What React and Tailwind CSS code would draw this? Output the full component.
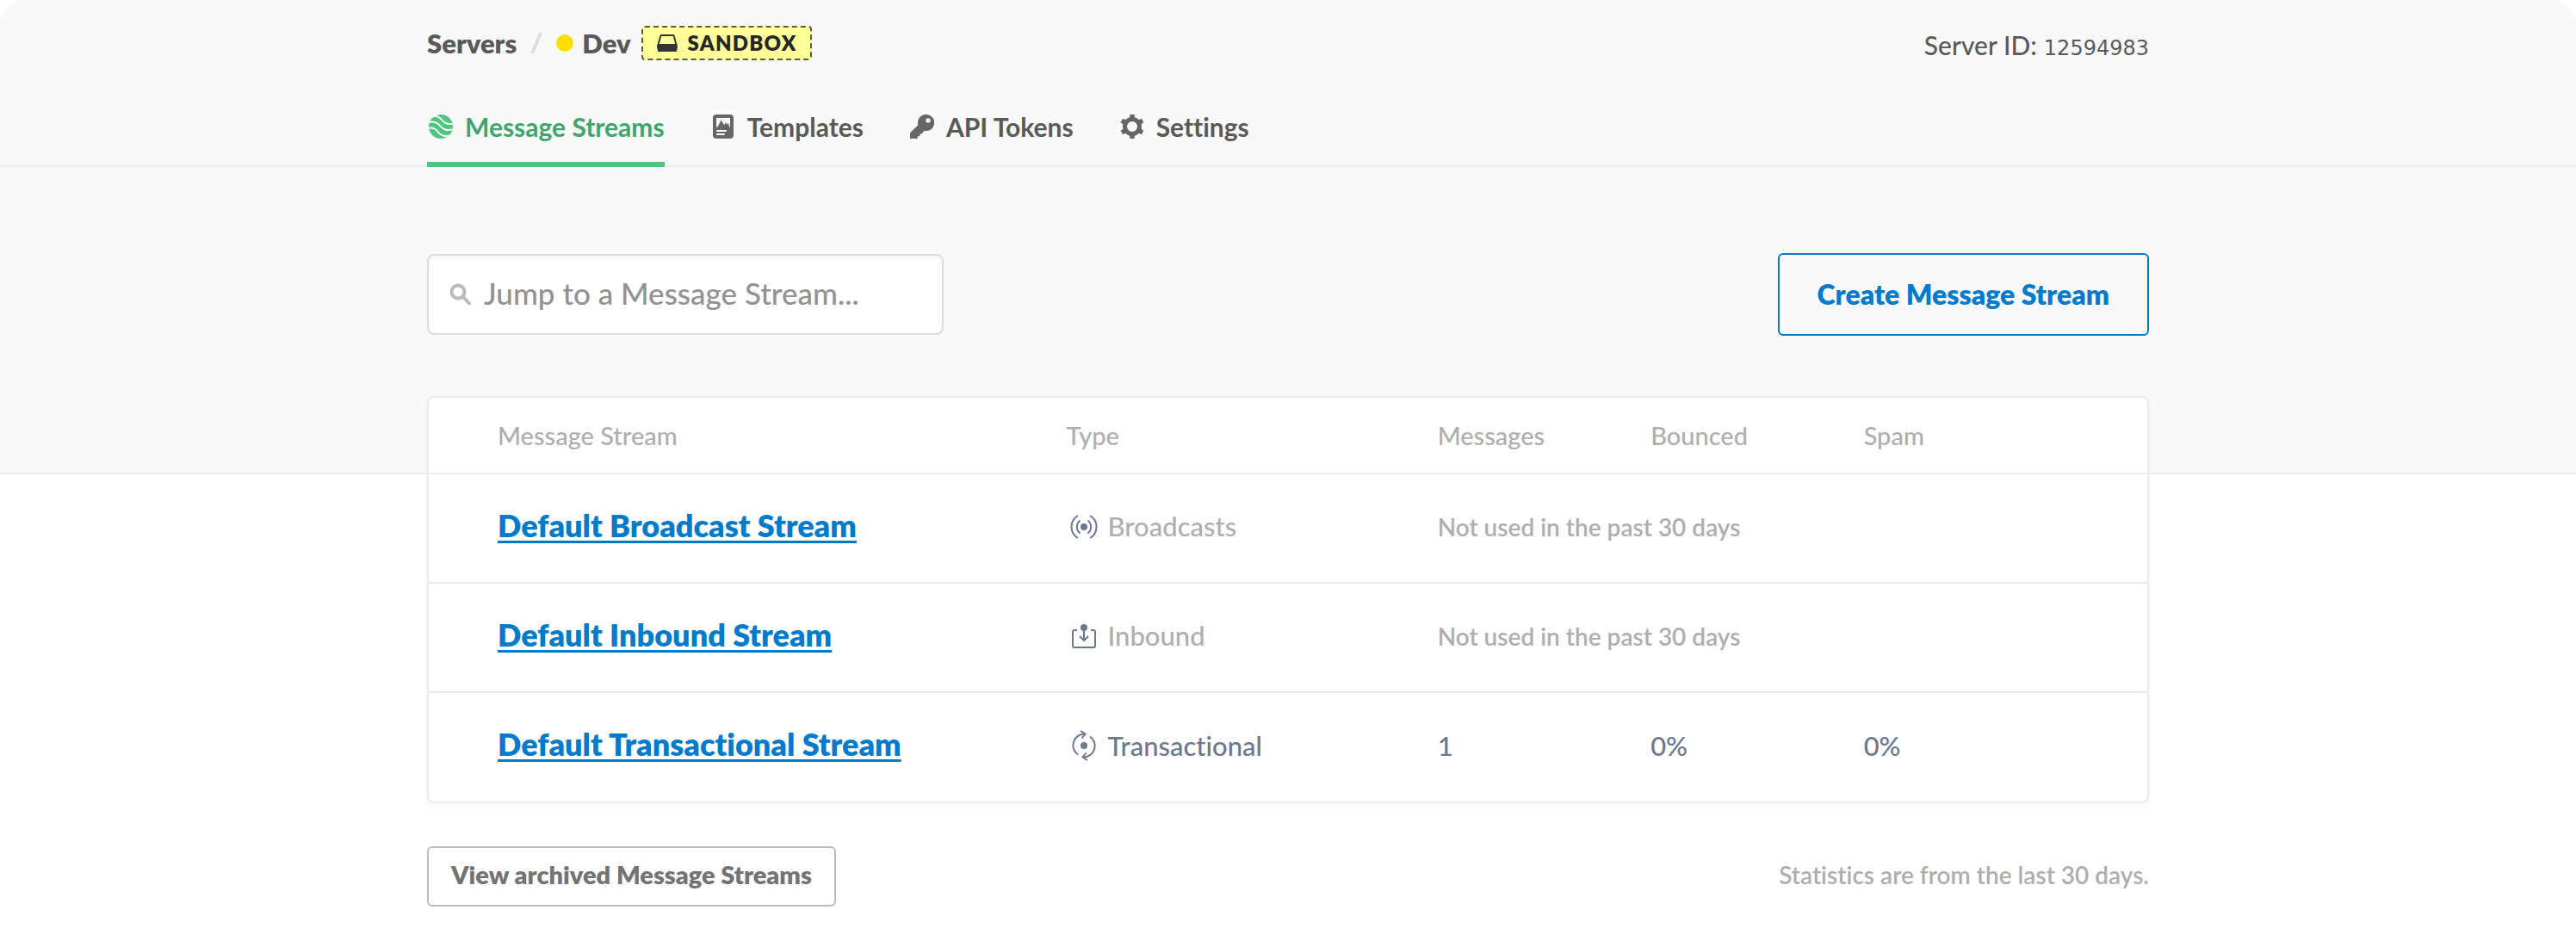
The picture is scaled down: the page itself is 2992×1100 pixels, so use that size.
import React from "react";

const sans = "font-['Lato',sans-serif] [font-variant-ligatures:none]";

function StreamsIcon() {
  return (
    <svg className="h-7 w-[30px] shrink-0" viewBox="-2 0 30 28" fill="none" aria-hidden="true">
      <clipPath id="streams-disc">
        <circle cx="14" cy="14" r="14" />
      </clipPath>
      <circle cx="14" cy="14" r="14" fill="#4fc47f" />
      <g clipPath="url(#streams-disc)" stroke="#f9f9f9" strokeWidth="2">
        <path d="M4 2.500C8 1.500 11.500 2 14.500 5.500C18 10 21 12 29 10.500" />
        <path d="M-1 9C5 7.500 9 8.500 12.500 12.500C16.500 17.500 20 19.500 29 17" />
        <path d="M-1 16C4 14.500 7.500 16 10.500 20C13.500 24 17 26 24 24.500" />
      </g>
    </svg>
  );
}

function TemplatesIcon() {
  return (
    <svg className="h-7 w-7 shrink-0" viewBox="-2 0 28 28" aria-hidden="true">
      <rect width="24" height="28" rx="4" fill="#666" />
      <path fill="#f9f9f9" d="M4 4H20V14.500H19L18 10L16.500 11.500L15 9.500L13 12L9.500 6.500L5.500 14.500H4Z" />
      <rect x="4" y="18" width="12" height="2" rx="1" fill="#f9f9f9" />
      <rect x="4" y="22" width="10" height="2" rx="1" fill="#f9f9f9" />
    </svg>
  );
}

function KeyIcon() {
  return (
    <svg className="h-7 w-7 shrink-0" viewBox="0 0 28 28" aria-hidden="true">
      <path
        fill="#666"
        fillRule="evenodd"
        d="M18.500 0A9.500 9.500 0 0 0 9.400 12.300L0 21.500V28H8.800V25.200H11.500V22.500H13.300L16.800 18.800A9.500 9.500 0 1 0 18.500 0ZM21 4.300A2.700 2.700 0 1 1 21 9.700A2.700 2.700 0 0 1 21 4.300Z"
      />
    </svg>
  );
}

function GearIcon() {
  return (
    <svg className="h-7 w-7 shrink-0" viewBox="0 0 28 28" fill="none" aria-hidden="true">
      <circle cx="14" cy="14" r="8.500" stroke="#666" strokeWidth="5" />
      <g fill="#666">
        {[0, 60, 120, 180, 240, 300].map((angle) => (
          <path key={angle} d="M11 4.500L11.400 0H16.600L17 4.500Z" transform={`rotate(${angle} 14 14)`} />
        ))}
      </g>
    </svg>
  );
}

function TrayIcon() {
  return (
    <svg className="h-5 w-6 shrink-0" viewBox="0 0 24 20" fill="#333" aria-hidden="true">
      <path
        fillRule="evenodd"
        d="M3.500 1.200Q3.800 0 5 0H19Q20.200 0 20.500 1.200L23.600 12Q24 13.200 24 14.500L22.800 20H1.200L0 14.500Q0 13.200 .4 12ZM5.200 2L2.800 11H21.200L18.800 2Z"
      />
    </svg>
  );
}

function SearchIcon() {
  return (
    <svg className="h-[26px] w-[26px] shrink-0" viewBox="0 0 26 26" fill="none" stroke="#bbb" strokeWidth="4" aria-hidden="true">
      <circle cx="10" cy="10" r="7.500" />
      <path d="M15.500 15.500L23 23.500" strokeLinecap="round" />
    </svg>
  );
}

function BroadcastIcon() {
  return (
    <svg className="h-9 w-8 shrink-0" viewBox="0 0 32 36" fill="none" stroke="#6b788e" strokeWidth="2" aria-hidden="true">
      <circle cx="16" cy="18" r="4" fill="#6b788e" stroke="none" />
      <path d="M11.500 10.500A9.500 9.500 0 0 0 11.500 25.500M20.500 10.500A9.500 9.500 0 0 1 20.500 25.500" />
      <path d="M9 5A15 15 0 0 0 9 31M23 5A15 15 0 0 1 23 31" />
    </svg>
  );
}

function InboundIcon() {
  return (
    <svg className="h-9 w-8 shrink-0" viewBox="0 0 32 36" fill="none" stroke="#6b788e" strokeWidth="2" aria-hidden="true">
      <circle cx="16" cy="8" r="4" fill="#6b788e" stroke="none" />
      <path d="M8 11H5Q3 11 3 13V29Q3 31 5 31H27Q29 31 29 29V13Q29 11 27 11H24" />
      <path d="M16 10V22M11 18L16 23L21 18" />
    </svg>
  );
}

function TransactionalIcon() {
  return (
    <svg className="h-9 w-8 shrink-0" viewBox="0 0 32 36" fill="none" stroke="#6b788e" strokeWidth="2" aria-hidden="true">
      <circle cx="16" cy="18" r="4" fill="#6b788e" stroke="none" />
      <path d="M9 28.500A13.200 13.200 0 0 1 17 4.500M12 1L17.500 4.500L13.500 9.500" />
      <path d="M23 7.500A13.200 13.200 0 0 1 15 31.500M20 35L14.500 31.500L18.500 26.500" />
    </svg>
  );
}

const tabs = [
  { label: "Message Streams", icon: StreamsIcon, active: true },
  { label: "Templates", icon: TemplatesIcon },
  { label: "API Tokens", icon: KeyIcon },
  { label: "Settings", icon: GearIcon },
];

const streams = [
  { name: "Default Broadcast Stream", type: "Broadcasts", icon: BroadcastIcon },
  { name: "Default Inbound Stream", type: "Inbound", icon: InboundIcon },
  {
    name: "Default Transactional Stream",
    type: "Transactional",
    icon: TransactionalIcon,
    stats: ["1", "0%", "0%"],
  },
];

function Header() {
  return (
    <header className="border-b-2 border-[#ebebeb]">
      <div className="mx-auto w-full max-w-[2000px]">
        <div className="flex items-center justify-between pt-7">
          <nav aria-label="Breadcrumb" className="flex h-11 items-center text-[31px] font-extrabold text-[#595959]">
            <a href="#servers">Servers</a>
            <svg className="mx-4 h-6 w-[14px]" viewBox="0 0 14 24" aria-hidden="true">
              <path d="M10 0H14L4 24H0Z" fill="#ddd" />
            </svg>
            <span className="mr-[10px] size-5 rounded-full bg-[#ffde00]" />
            <a href="#dev">Dev</a>
            <span className="ml-3 flex h-10 items-center gap-3 rounded border-2 border-dashed border-[#5c5c3d] bg-[#ffff99] px-4 text-2xl font-extrabold tracking-wider text-[#262626]">
              <TrayIcon />
              SANDBOX
            </span>
          </nav>
          <p className="flex items-baseline gap-2 pt-1 text-[30px] leading-10 font-medium text-[#595959]">
            Server ID:
            <span className="font-['DejaVu_Sans',sans-serif] text-2xl font-normal">12594983</span>
          </p>
        </div>
        <nav aria-label="Server" className="-mb-0.5 mt-[30px] flex gap-[54px] text-[30px] font-bold">
          {tabs.map(({ label, icon: Icon, active }) => (
            <a
              key={label}
              href={"#" + label.toLowerCase().replace(" ", "-")}
              aria-current={active ? "page" : undefined}
              className={
                active
                  ? "flex h-[92px] items-center gap-[14px] border-b-[6px] border-[#4fc47f] pt-1 text-[#40a56c]"
                  : "flex h-[92px] items-center gap-[14px] border-b-[6px] border-transparent pt-1 text-[#595959]"
              }
            >
              <Icon />
              {label}
            </a>
          ))}
        </nav>
      </div>
    </header>
  );
}

function Toolbar() {
  return (
    <div className="mx-auto flex w-full max-w-[2000px] items-center justify-between">
      <label className="flex h-[94px] w-[600px] items-center gap-[14px] rounded-lg border-2 border-[#ddd] bg-white px-6 shadow-[inset_0_2px_6px_rgba(0,0,0,0.05)]">
        <SearchIcon />
        <input
          type="text"
          aria-label="Jump to a Message Stream"
          placeholder="Jump to a Message Stream..."
          className="min-w-0 flex-1 bg-transparent pb-1 text-[35px] font-medium outline-none placeholder:text-[#929292]"
        />
      </label>
      <button
        type="button"
        className="h-24 rounded-md border-2 border-[#007bcb] px-[44px] text-[32px] font-extrabold text-[#007bcb]"
      >
        Create Message Stream
      </button>
    </div>
  );
}

function StreamsTable() {
  return (
    <div className="rounded-lg border-2 border-[#ebebeb] bg-white shadow-[0_4px_8px_rgba(0,0,0,0.04)]">
      <table className="w-full table-fixed border-separate border-spacing-0 text-left">
        <thead className="text-[29px] text-[#aeaeae]">
          <tr className="h-[89px]">
            <th scope="col" className="w-[37.1%] border-b-2 border-[#ebebeb] pl-20 font-medium">Message Stream</th>
            <th scope="col" className="w-[21.6%] border-b-2 border-[#ebebeb] font-medium">Type</th>
            <th scope="col" className="w-[12.4%] border-b-2 border-[#ebebeb] font-medium">Messages</th>
            <th scope="col" className="w-[12.4%] border-b-2 border-[#ebebeb] font-medium">Bounced</th>
            <th scope="col" className="border-b-2 border-[#ebebeb] font-medium">Spam</th>
          </tr>
        </thead>
        <tbody className="font-medium text-[#aeaeae] [&>tr:last-child>td]:border-b-0">
          {streams.map(({ name, type, icon: Icon, stats }) => (
            <tr key={name} className="h-[127px] last:h-[126px]">
              <td className="border-b-2 border-[#ebebeb] pb-2 pl-20">
                <a
                  href={"#" + name.toLowerCase().replaceAll(" ", "-")}
                  className="text-4xl font-extrabold text-[#007bcb] underline decoration-[3px] underline-offset-4 [text-decoration-skip-ink:none]"
                >
                  {name}
                </a>
              </td>
              <td className="border-b-2 border-[#ebebeb] pb-1">
                <span className={stats ? "flex items-center gap-3 pl-1 text-[31px] text-[#6b788e]" : "flex items-center gap-3 pl-1 text-[31px]"}>
                  <Icon />
                  {type}
                </span>
              </td>
              {stats ? (
                stats.map((value, i) => (
                  <td key={i} className="border-b-2 border-[#ebebeb] pb-1 text-[31px] text-[#6b788e]">
                    {value}
                  </td>
                ))
              ) : (
                <td colSpan={3} className="border-b-2 border-[#ebebeb] pb-1 text-[28px] font-semibold">
                  Not used in the past 30 days
                </td>
              )}
            </tr>
          ))}
        </tbody>
      </table>
    </div>
  );
}

export default function App() {
  return (
    <div className={`min-h-screen bg-white ${sans}`}>
      <div className="rounded-t-[28px] border-b-2 border-[#ebebeb] bg-[#f9f9f9] pb-[159px]">
        <Header />
        <div className="mt-[100px]">
          <Toolbar />
        </div>
      </div>
      <main className="mx-auto -mt-[91px] w-full max-w-[2000px]">
        <StreamsTable />
        <div className="mt-[50px] flex items-center justify-between pb-12">
          <button
            type="button"
            className="h-[70px] rounded-md border-2 border-[#bbb] px-[26px] pb-1 text-[29px] font-extrabold text-[#737373]"
          >
            View archived Message Streams
          </button>
          <p className="pb-1 text-[28px] font-semibold text-[#aeaeae]">Statistics are from the last 30 days.</p>
        </div>
      </main>
    </div>
  );
}
